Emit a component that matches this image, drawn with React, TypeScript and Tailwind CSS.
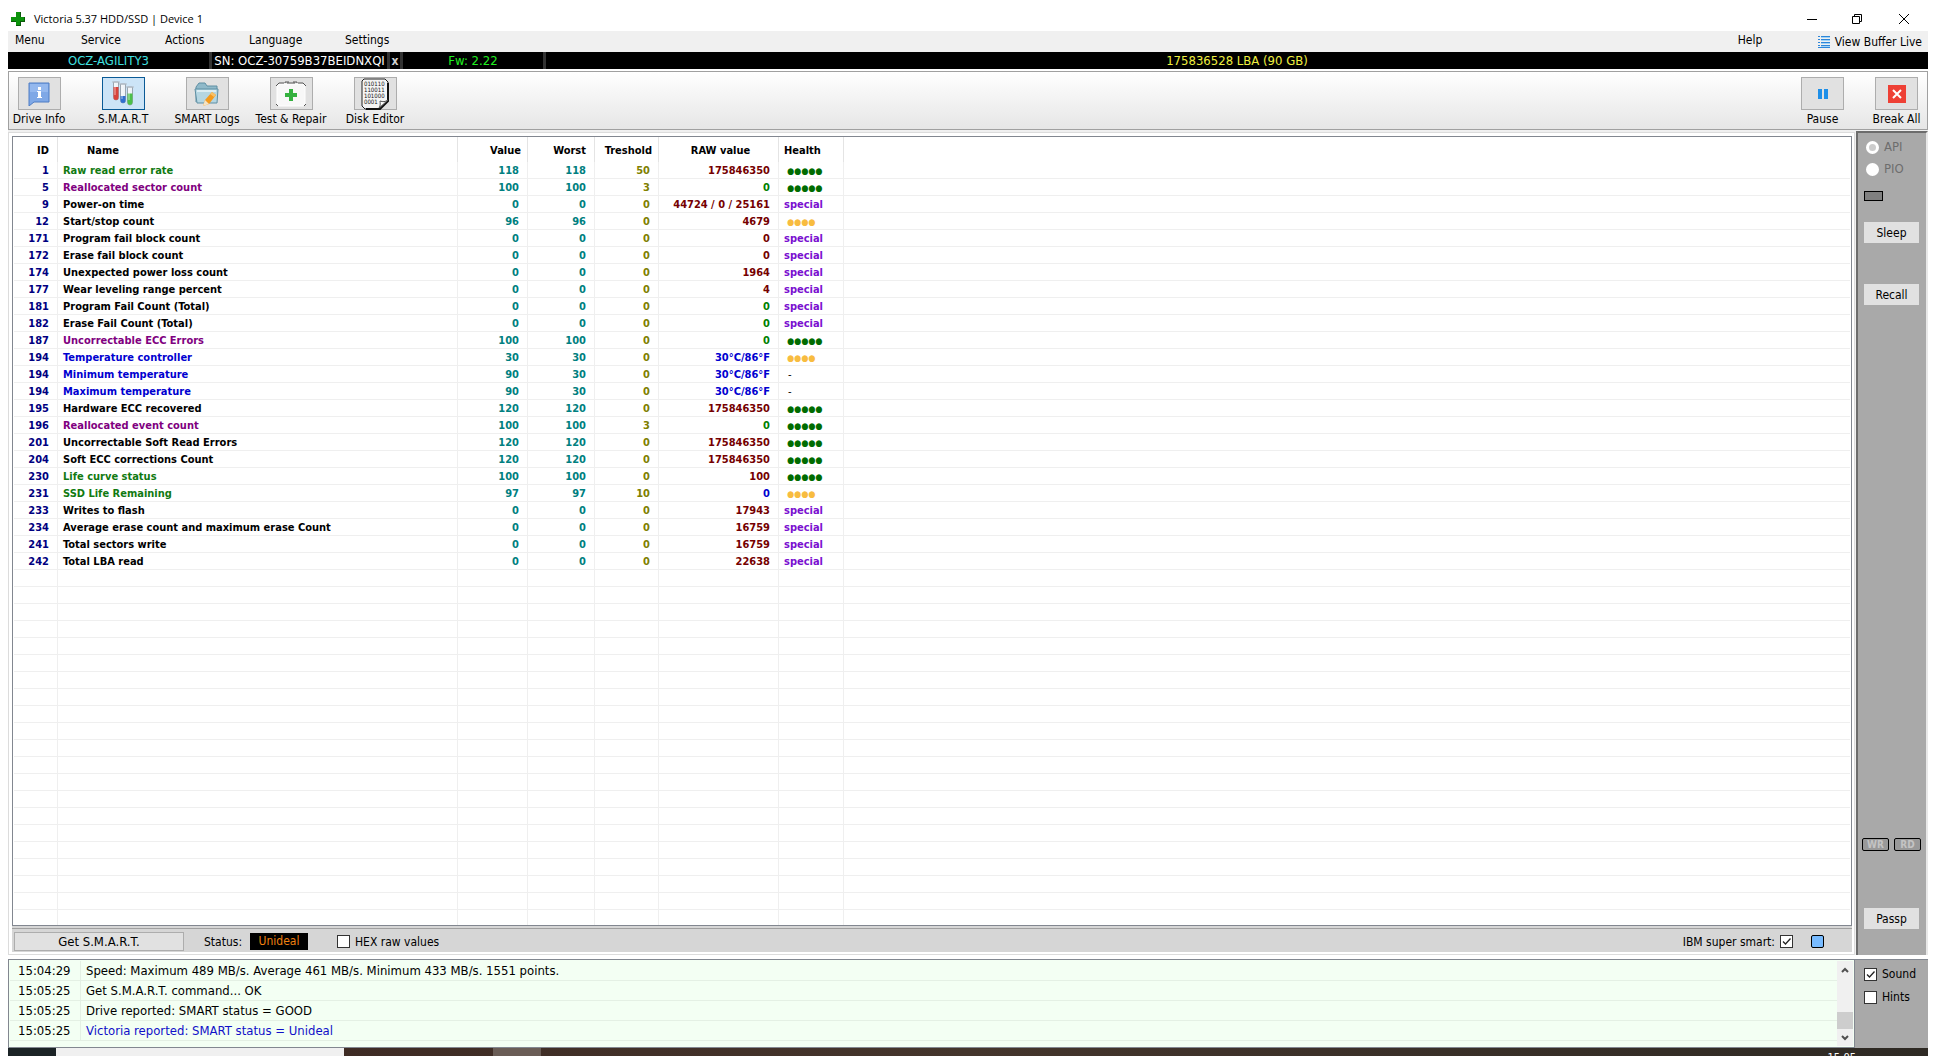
import React from 'react'
import clsx from 'clsx'

type Health = 'good' | 'fair' | 'special' | 'none'

interface Attribute {
    id: number
    name: string
    nameColor?: string
    value: number
    worst: number
    threshold: number
    raw: string
    rawColor?: string
    health: Health
}

const GREEN = 'text-[#117a11]'
const PURPLE = 'text-[#800080]'
const BLUE = 'text-[#0000d0]'
const LIME = 'text-[#008000]'

const attributes: Attribute[] = [
    { id: 1, name: 'Raw read error rate', nameColor: GREEN, value: 118, worst: 118, threshold: 50, raw: '175846350', health: 'good' },
    { id: 5, name: 'Reallocated sector count', nameColor: PURPLE, value: 100, worst: 100, threshold: 3, raw: '0', rawColor: LIME, health: 'good' },
    { id: 9, name: 'Power-on time', value: 0, worst: 0, threshold: 0, raw: '44724 / 0 / 25161', health: 'special' },
    { id: 12, name: 'Start/stop count', value: 96, worst: 96, threshold: 0, raw: '4679', health: 'fair' },
    { id: 171, name: 'Program fail block count', value: 0, worst: 0, threshold: 0, raw: '0', health: 'special' },
    { id: 172, name: 'Erase fail block count', value: 0, worst: 0, threshold: 0, raw: '0', health: 'special' },
    { id: 174, name: 'Unexpected power loss count', value: 0, worst: 0, threshold: 0, raw: '1964', health: 'special' },
    { id: 177, name: 'Wear leveling range percent', value: 0, worst: 0, threshold: 0, raw: '4', health: 'special' },
    { id: 181, name: 'Program Fail Count (Total)', value: 0, worst: 0, threshold: 0, raw: '0', rawColor: LIME, health: 'special' },
    { id: 182, name: 'Erase Fail Count (Total)', value: 0, worst: 0, threshold: 0, raw: '0', rawColor: LIME, health: 'special' },
    { id: 187, name: 'Uncorrectable ECC Errors', nameColor: PURPLE, value: 100, worst: 100, threshold: 0, raw: '0', rawColor: LIME, health: 'good' },
    { id: 194, name: 'Temperature controller', nameColor: BLUE, value: 30, worst: 30, threshold: 0, raw: '30°C/86°F', rawColor: BLUE, health: 'fair' },
    { id: 194, name: 'Minimum temperature', nameColor: BLUE, value: 90, worst: 30, threshold: 0, raw: '30°C/86°F', rawColor: BLUE, health: 'none' },
    { id: 194, name: 'Maximum temperature', nameColor: BLUE, value: 90, worst: 30, threshold: 0, raw: '30°C/86°F', rawColor: BLUE, health: 'none' },
    { id: 195, name: 'Hardware ECC recovered', value: 120, worst: 120, threshold: 0, raw: '175846350', health: 'good' },
    { id: 196, name: 'Reallocated event count', nameColor: PURPLE, value: 100, worst: 100, threshold: 3, raw: '0', rawColor: LIME, health: 'good' },
    { id: 201, name: 'Uncorrectable Soft Read Errors', value: 120, worst: 120, threshold: 0, raw: '175846350', health: 'good' },
    { id: 204, name: 'Soft ECC corrections Count', value: 120, worst: 120, threshold: 0, raw: '175846350', health: 'good' },
    { id: 230, name: 'Life curve status', nameColor: GREEN, value: 100, worst: 100, threshold: 0, raw: '100', health: 'good' },
    { id: 231, name: 'SSD Life Remaining', nameColor: GREEN, value: 97, worst: 97, threshold: 10, raw: '0', rawColor: BLUE, health: 'fair' },
    { id: 233, name: 'Writes to flash', value: 0, worst: 0, threshold: 0, raw: '17943', health: 'special' },
    { id: 234, name: 'Average erase count and maximum erase Count', value: 0, worst: 0, threshold: 0, raw: '16759', health: 'special' },
    { id: 241, name: 'Total sectors write', value: 0, worst: 0, threshold: 0, raw: '16759', health: 'special' },
    { id: 242, name: 'Total LBA read', value: 0, worst: 0, threshold: 0, raw: '22638', health: 'special' },
]

const EMPTY_ROWS = 21

const logLines = [
    { time: '15:04:29', text: 'Speed: Maximum 489 MB/s. Average 461 MB/s. Minimum 433 MB/s. 1551 points.' },
    { time: '15:05:25', text: 'Get S.M.A.R.T. command... OK' },
    { time: '15:05:25', text: 'Drive reported: SMART status = GOOD' },
    { time: '15:05:25', text: 'Victoria reported: SMART status = Unideal', color: 'text-[#1010c8]' },
]

const DriveInfoIcon = () => (
    <svg width="22" height="24" viewBox="0 0 22 24">
        <path d="M1 1h20v19H6l-5 4z" fill="#7fa8e6" stroke="#4f7cc4" />
        <path d="M2 2h18v8H2z" fill="#94b8ee" />
        <path d="M10 5h3v3h-3zM9 9h4v6h1v1H9v-1h1v-5H9z" fill="#fff" />
    </svg>
)

const TubesIcon = () => (
    <svg width="22" height="26" viewBox="0 0 22 26">
        <path d="M1.5 1v15.500a2.500 2.500 0 0 0 5 0V1z" fill="#eef3f8" stroke="#9aa5b0" />
        <path d="M1.500 6h5v10.500a2.500 2.500 0 0 1-5 0z" fill="#d8433c" />
        <path d="M8.500 3v16.500a2.500 2.500 0 0 0 5 0V3z" fill="#eef3f8" stroke="#9aa5b0" />
        <path d="M8.500 15h5v4.500a2.500 2.500 0 0 1-5 0z" fill="#2f6fd0" />
        <path d="M15.500 6v15.500a2.500 2.500 0 0 0 5 0V6z" fill="#eef3f8" stroke="#9aa5b0" />
        <path d="M15.500 12.500h5v9a2.500 2.500 0 0 1-5 0z" fill="#4cc04a" />
        <path d="M0 1h8M7 3h8M14 6h8" stroke="#b4bdc6" />
        <path d="M3 2v12M10 4v14M17 7v12" stroke="#fff" strokeOpacity=".6" />
    </svg>
)

const LogsIcon = () => (
    <svg width="26" height="24" viewBox="0 0 26 24">
        <path d="M2 20V5l3-4h6l2 3h10v3" fill="#8fb9c9" stroke="#5f8fa3" />
        <path d="M1 7h23l-1 14H3z" fill="#b5d6e2" stroke="#5f8fa3" />
        <path d="M3 9h19" stroke="#dcedf3" strokeWidth="2" />
        <path d="M18 10l4 3-7 9-6 2 2-6z" fill="#f39a1e" />
        <path d="M11 18l4 4-6 2z" fill="#f5e3c4" />
        <path d="M18 10l4 3-2 2-4-3z" fill="#f7c168" />
    </svg>
)

const RepairIcon = () => (
    <svg width="32" height="26" viewBox="0 0 32 26">
        <rect x="2" y="3" width="28" height="22" rx="2" fill="#f8f8f8" stroke="#fff" />
        <path d="M1 5l3-3h5M12 2h8M23 2h5l3 3M1 23l2 2M31 23l-2 2M10 2v-1h4M18 1h4v1" fill="none" stroke="#555" />
        <path d="M14 8h4v4h4v4h-4v4h-4v-4h-4v-4h4z" fill="#35b13f" />
    </svg>
)

const EditorIcon = () => (
    <svg width="30" height="32" viewBox="0 0 30 32">
        <path d="M4 1h21l3 3v19l-8 8H5l-3-3V3z" fill="#f4f4f4" stroke="#222" />
        <path d="M28 5v18l-8 8H6" fill="none" stroke="#111" strokeWidth="2" />
        <g fontFamily="DejaVu Sans Condensed" fontSize="6" fill="#111">
            <text x="4" y="8">010110</text>
            <text x="4" y="14">110011</text>
            <text x="4" y="20">101000</text>
            <text x="4" y="26">0001</text>
        </g>
        <path d="M19 30c2-3 1-5 1-7 3 1 5 1 8-1z" fill="#fff" stroke="#555" />
    </svg>
)

const PauseIcon = () => (
    <svg width="10" height="10" viewBox="0 0 10 10">
        <path d="M0 0h4v10H0zM6 0h4v10H6z" fill="#1e8fe8" />
    </svg>
)

const BreakIcon = () => (
    <svg width="18" height="18" viewBox="0 0 18 18">
        <path d="M0 0h18v18H0z" fill="#ee4035" />
        <path d="M5 5l8 8M13 5l-8 8" stroke="#fff" strokeWidth="2" />
    </svg>
)

const ListIcon = () => (
    <svg width="12" height="12" viewBox="0 0 12 12">
        <path d="M0 .5h2M0 3.500h2M0 6.500h2M0 9.500h2M3 .5h9M3 3.500h9M3 6.500h9M3 9.500h9" stroke="#2f86d8" />
        <path d="M3 1.500h9M3 4.500h9M3 7.500h9M3 10.500h9" stroke="#9fd4f8" />
        <path d="M0 11.500h12" stroke="#2f86d8" />
    </svg>
)

interface ToolProps {
    label: string
    active?: boolean
    className?: string
    children: React.ReactNode
}

const ToolButton = ({ label, active, className, children }: ToolProps) => (
    <label className={clsx('flex flex-col items-center whitespace-nowrap', className)}>
        <button
            className={clsx(
                'flex h-[33px] w-[43px] items-center justify-center border',
                active ? 'border-[#0a5a96] bg-[#cce4f7]' : 'border-[#adadad] bg-[#e1e1e1]'
            )}
        >
            {children}
        </button>
        <span className="text-xs leading-[18px]">{label}</span>
    </label>
)

interface CheckProps {
    label: string
    checked?: boolean
    before?: boolean
}

const CheckBox = ({ label, checked, before }: CheckProps) => (
    <label className={clsx('flex items-center gap-[5px]', before && 'flex-row-reverse')}>
        <span className="relative flex">
            <input
                type="checkbox"
                defaultChecked={checked}
                className="peer h-[13px] w-[13px] appearance-none border border-[#333] bg-white"
            />
            <svg
                className="pointer-events-none absolute inset-0 hidden peer-checked:block"
                width="13"
                height="13"
                viewBox="0 0 13 13"
            >
                <path d="M3 6.500l2.500 2.500L10.500 3.500" fill="none" stroke="#222" strokeWidth="1.3" />
            </svg>
        </span>
        {label}
    </label>
)

const HealthCell = ({ health }: { health: Health }) => {
    if (health === 'special') return <span className="text-[#7a10d0]">special</span>
    if (health === 'none') return <span className="pl-1 font-normal">-</span>
    return (
        <span className={clsx('pl-[3px] text-[9px]', health === 'good' ? 'text-[#006c00]' : 'text-[#f8bc40]')}>
            {health === 'good' ? '●●●●●' : '●●●●'}
        </span>
    )
}

const TitleBar = () => (
    <header className="flex h-[31px] shrink-0 items-center pl-[3px] pt-1.5 font-['Open_Sans',sans-serif] text-[11px]">
        <svg width="14" height="14" viewBox="0 0 14 14">
            <path d="M5 0h5v5h4v5h-4v4H5v-4H0V5h5z" fill="#0a5a0a" />
            <path d="M5 0h4v5h4v4H9v4H5V9H0V5h5z" fill="#0c930c" />
        </svg>
        <h1 className="ml-[9px] grow pt-0.5">Victoria 5.37 HDD/SSD | Device 1</h1>
        <button aria-label="Minimize" className="flex h-6 w-[45px] items-center justify-center">
            <svg width="10" height="10" viewBox="0 0 10 10">
                <path d="M0 5.500h10" stroke="#000" />
            </svg>
        </button>
        <button aria-label="Restore" className="flex h-6 w-[45px] items-center justify-center">
            <svg width="10" height="10" viewBox="0 0 10 10" fill="none" stroke="#000">
                <path d="M.5 2.500h7v7h-7zM2.500 2.500v-2h7v7h-2" />
            </svg>
        </button>
        <button aria-label="Close" className="flex h-6 w-[49px] items-center justify-center">
            <svg width="10" height="10" viewBox="0 0 10 10">
                <path d="M0 0l10 10M10 0L0 10" stroke="#000" />
            </svg>
        </button>
    </header>
)

const MenuBar = () => (
    <nav className="flex h-[21px] shrink-0 items-start bg-[#f0f0f0] pl-[7px] pr-1.5 text-xs leading-[18px]">
        <button className="w-[66px] text-left">Menu</button>
        <button className="w-[84px] text-left">Service</button>
        <button className="w-[84px] text-left">Actions</button>
        <button className="w-24 text-left">Language</button>
        <button className="text-left">Settings</button>
        <button className="ml-auto w-20 text-left">Help</button>
        <button className="flex items-center gap-[5px] pt-0.5">
            <ListIcon />
            View Buffer Live
        </button>
    </nav>
)

const DeviceBar = () => (
    <div className="flex h-[17px] shrink-0 whitespace-nowrap bg-black text-center text-[13px] leading-[17px]">
        <div className="w-[204px] border-r-3 border-[#333] text-[#40e0e0]">OCZ-AGILITY3</div>
        <div className="w-[178px] border-r-3 border-[#333] text-white">SN: OCZ-30759B37BEIDNXQI</div>
        <button className="w-[13px] border-r-3 border-[#333] text-xs font-bold leading-4 text-[#d0d0d0]">x</button>
        <div className="w-[143px] border-r-3 border-[#333] text-[#20f020]">Fw: 2.22</div>
        <div className="grow text-[#f0f040]">175836528 LBA (90 GB)</div>
    </div>
)

const Toolbar = () => (
    <div className="mt-0.5 flex h-[59px] shrink-0 border border-[#a0a0a0] bg-linear-to-b from-white to-[#e6e6e6] pr-0.5 pt-[5px]">
        <div className="-ml-3 flex">
            <ToolButton label="Drive Info" className="w-[84px]"><DriveInfoIcon /></ToolButton>
            <ToolButton label="S.M.A.R.T" active className="w-[84px]"><TubesIcon /></ToolButton>
            <ToolButton label="SMART Logs" className="w-[84px]"><LogsIcon /></ToolButton>
            <ToolButton label="Test & Repair" className="w-[84px]"><RepairIcon /></ToolButton>
            <ToolButton label="Disk Editor" className="w-[84px]"><EditorIcon /></ToolButton>
        </div>
        <div className="ml-auto flex">
            <ToolButton label="Pause" className="w-[91px]"><PauseIcon /></ToolButton>
            <ToolButton label="Break All" className="w-[57px]"><BreakIcon /></ToolButton>
        </div>
    </div>
)

const SmartTable = () => (
    <div className="min-h-0 flex-1 basis-0 overflow-hidden border border-[#828790] bg-white px-px">
        <table className="w-full table-fixed border-separate border-spacing-0 text-[11px] font-bold leading-[14px]">
            <colgroup>
                <col className="w-[44px]" />
                <col className="w-[400px]" />
                <col className="w-[70px]" />
                <col className="w-[67px]" />
                <col className="w-16" />
                <col className="w-[120px]" />
                <col className="w-[65px]" />
                <col />
            </colgroup>
            <thead>
                <tr className="h-[25px] *:border-r *:border-[#e4e4e4] *:px-0 *:pb-0 *:pt-0.5 *:last:border-0">
                    <th><div className="pr-2 text-right">ID</div></th>
                    <th><div className="pl-[29px] text-left">Name</div></th>
                    <th><div className="pr-1.5 text-right">Value</div></th>
                    <th><div className="pr-2 text-right">Worst</div></th>
                    <th><div className="pr-1.5 text-right">Treshold</div></th>
                    <th><div className="pl-1 text-center">RAW value</div></th>
                    <th><div className="pl-[5px] text-left">Health</div></th>
                    <th />
                </tr>
            </thead>
            <tbody className="[&_td]:h-[17px] [&_td]:border-b [&_td]:border-r [&_td]:border-[#efefef] [&_td]:px-0 [&_td]:pb-0 [&_td]:pt-0.5 [&_td:last-child]:border-r-0">
                {attributes.map((row, i) => (
                    <tr key={i}>
                        <td className="text-right text-[#000080]"><div className="pr-2">{row.id}</div></td>
                        <td className={row.nameColor}><div className="pl-[5px]">{row.name}</div></td>
                        <td className="text-right text-[#008080]"><div className="pr-2">{row.value}</div></td>
                        <td className="text-right text-[#008080]"><div className="pr-2">{row.worst}</div></td>
                        <td className="text-right text-[#808000]"><div className="pr-2">{row.threshold}</div></td>
                        <td className={clsx('text-right', row.rawColor ?? 'text-[#750000]')}><div className="pr-2">{row.raw}</div></td>
                        <td><div className="h-[14px] pl-[5px]"><HealthCell health={row.health} /></div></td>
                        <td />
                    </tr>
                ))}
                {Array.from({ length: EMPTY_ROWS }, (_, i) => (
                    <tr key={i}>
                        <td /><td /><td /><td /><td /><td /><td /><td />
                    </tr>
                ))}
            </tbody>
        </table>
    </div>
)

const StatusBar = () => (
    <div className="flex h-[25px] shrink-0 items-center border-b-2 border-white bg-[#d6d6d6] pr-7 pt-0.5 text-xs">
        <button className="ml-0.5 h-[19px] w-[170px] border border-[#adadad] bg-[#e1e1e1] text-[13px] leading-[17px]">Get S.M.A.R.T.</button>
        <span className="ml-5 w-[46px]">Status:</span>
        <span className="mr-[29px] w-[58px] bg-black text-center leading-[17px] text-[#f08010]">Unideal</span>
        <CheckBox label="HEX raw values" />
        <div className="ml-auto mr-[18px]"><CheckBox label="IBM super smart:" checked before /></div>
        <span className="h-[13px] w-[13px] rounded-xs border border-black bg-[#78bbff]" />
    </div>
)

const SidePanel = () => (
    <aside className="flex w-[72px] shrink-0 flex-col border-l-2 border-r-2 border-t-2 border-l-[#6c6c6c] border-r-[#e8e8e8] border-t-[#6c6c6c] bg-[#a9a9a9] pl-1.5 text-xs">
        {['API', 'PIO'].map((mode, i) => (
            <label key={mode} className="mt-1.5 flex h-4 items-center gap-[5px] pl-0.5 text-[13px] text-[#6d6d6d]">
                <input
                    type="radio"
                    name="mode"
                    disabled
                    defaultChecked={i === 0}
                    className="h-[13px] w-[13px] appearance-none rounded-full border-3 border-white bg-white checked:bg-[#cccccc]"
                />
                {mode}
            </label>
        ))}
        <div className="mt-3.5 h-2.5 w-[19px] border border-black bg-[#808080]" />
        <button className="mt-[21px] h-[21px] w-[55px] bg-[#e1e1e1]">Sleep</button>
        <button className="mt-[41px] h-[21px] w-[55px] bg-[#e1e1e1]">Recall</button>
        <div className="-ml-0.5 mt-auto flex gap-[5px] text-center text-[10px] font-bold leading-[11px] text-[#c4c4c4]">
            <span className="w-[27px] rounded-xs border border-black bg-[#999]">WR</span>
            <span className="w-[27px] rounded-xs border border-black bg-[#999]">RD</span>
        </div>
        <button className="mb-[26px] mt-[57px] h-[21px] w-[55px] bg-[#e1e1e1]">Passp</button>
    </aside>
)

const LogPanel = () => (
    <div className="flex grow border border-[#828790] bg-[#f3fff3] p-px">
        <table className="w-full table-fixed border-separate border-spacing-0 self-start text-[13px] leading-[19px]">
            <colgroup>
                <col className="w-[71px]" />
                <col />
            </colgroup>
            <tbody>
                {logLines.map((line, i) => (
                    <tr key={i} className="*:border-b *:border-[#e4f0e4] *:p-0">
                        <td className="border-r"><div className="pl-2">{line.time}</div></td>
                        <td className={line.color}><div className="pl-[5px]">{line.text}</div></td>
                    </tr>
                ))}
            </tbody>
        </table>
        <div className="flex w-4 shrink-0 flex-col items-center bg-[#f0f0f0]">
            <button aria-label="Scroll up" className="flex h-[17px] items-center">
                <svg width="8" height="6" viewBox="0 0 8 6"><path d="M1 5l3-3 3 3" fill="none" stroke="#505050" strokeWidth="2" /></svg>
            </button>
            <div className="mt-auto h-[17px] w-full bg-[#cdcdcd]" />
            <button aria-label="Scroll down" className="flex h-[17px] items-center">
                <svg width="8" height="6" viewBox="0 0 8 6"><path d="M1 1l3 3 3-3" fill="none" stroke="#505050" strokeWidth="2" /></svg>
            </button>
        </div>
    </div>
)

const Taskbar = () => (
    <footer className="flex h-2 shrink-0 overflow-hidden bg-linear-to-r from-[#3b2620] via-[#44352c] to-[#2e2a24]">
        <div className="w-12 bg-[#1b2326]" />
        <div className="w-72 bg-[#f0f0f0]" />
        <div className="ml-[149px] w-12 bg-[#6a5d56]" />
        <time className="ml-auto mr-[72px] pt-0.5 text-[11px] leading-4 text-white">15:05</time>
    </footer>
)

export default function App(): React.ReactElement {
    return (
        <div className="flex h-screen flex-col overflow-hidden bg-white px-2 font-['DejaVu_Sans_Condensed','Noto_Sans',sans-serif] text-black">
            <TitleBar />
            <MenuBar />
            <DeviceBar />
            <Toolbar />
            <div className="flex min-h-0 grow bg-[#f0f0f0] pt-px">
                <main className="mr-px mt-px flex grow flex-col border border-[#dcdcdc] bg-white p-[3px] pb-0 pr-0.5">
                    <SmartTable />
                    <div className="h-[3px] shrink-0 border-b border-[#a0a0a0] bg-[#d6d6d6]" />
                    <StatusBar />
                </main>
                <SidePanel />
            </div>
            <div className="mt-1 flex h-[89px] shrink-0">
                <LogPanel />
                <div className="flex w-[73px] shrink-0 flex-col gap-1.5 border-t border-[#828790] bg-[#a9a9a9] pl-[9px] pt-1.5 text-xs leading-[17px]">
                    <CheckBox label="Sound" checked />
                    <CheckBox label="Hints" />
                </div>
            </div>
            <Taskbar />
        </div>
    )
}
